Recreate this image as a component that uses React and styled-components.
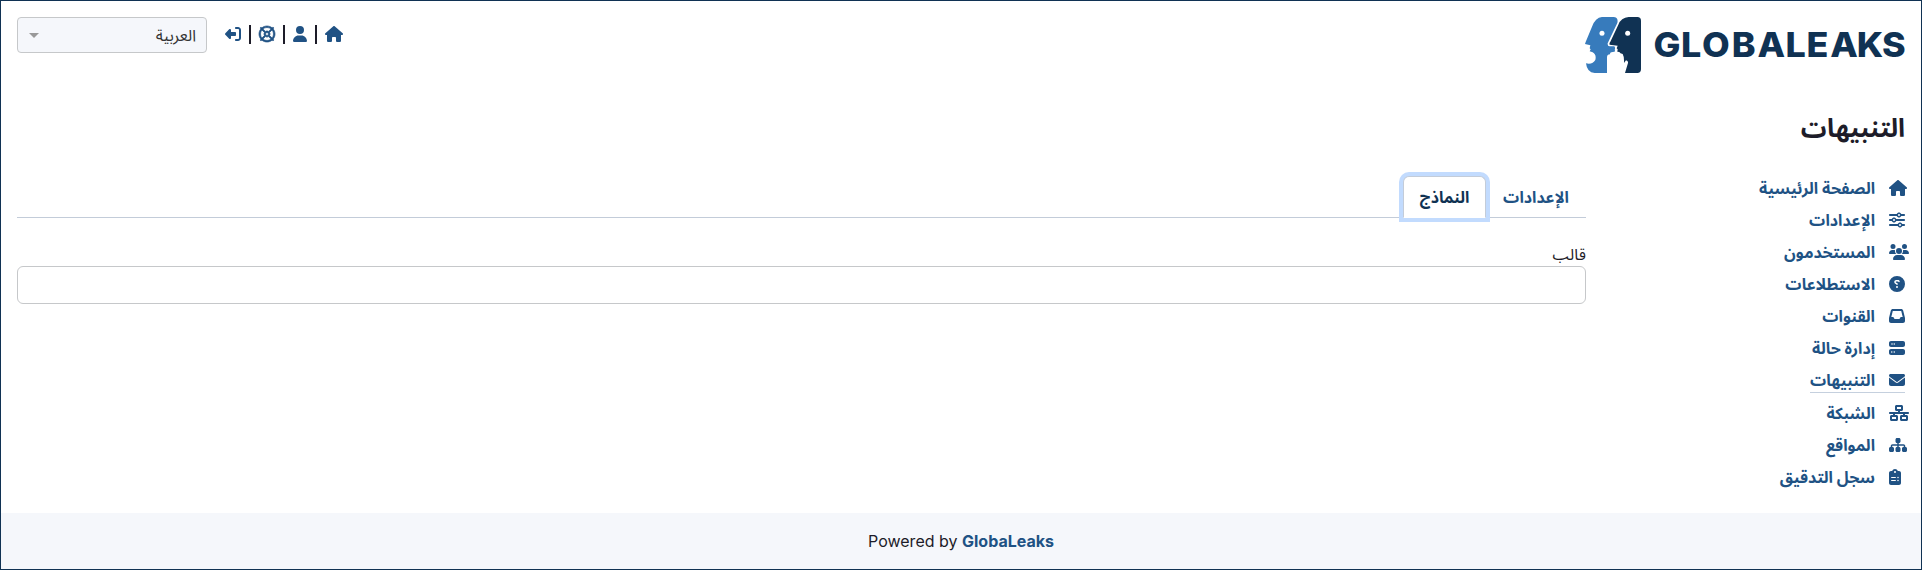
import React from "react";
import styled, { createGlobalStyle, css } from "styled-components";
import {
  FaHouse, FaUser, FaRegLifeRing, FaRightFromBracket, FaSliders, FaUsers, FaCircleQuestion,
  FaInbox, FaServer, FaEnvelope, FaNetworkWired, FaSitemap, FaClipboardList,
} from "react-icons/fa6";

const navy = "#103253";
const link = "#205284";
const ink = "#1d1c29";

const GlobalStyle = createGlobalStyle`
  * { box-sizing: border-box; }
  body {
    margin: 0;
    color: ${ink};
    background: #fff;
    font: 16px/24px Inter, "Noto Sans Arabic", "Noto Sans", "DejaVu Sans", sans-serif;
  }
`;

const Page = styled.div`
  display: flex;
  flex-direction: column;
  height: 570px;
  border: 1px solid ${navy};
  overflow: hidden;
`;

const Header = styled.header`
  display: flex;
  justify-content: space-between;
  align-items: flex-start;
  height: 95px;
  padding: 16px 16px 0;
`;

const Logo = styled.svg`
  display: block;
  width: 322px;
  height: 58px;
`;

const Wordmark = styled.text`
  font: 800 34.5px Inter, sans-serif;
  fill: ${navy};
  direction: ltr;
`;

const Tools = styled.div`
  display: flex;
  align-items: flex-start;
  gap: 18px;
`;

const ToolLinks = styled.div`
  display: flex;
  align-items: center;
  gap: 8px;
  height: 34px;
  color: ${link};
`;

const Divider = styled.span`
  width: 2px;
  height: 19px;
  background: ${ink};
`;

const Icon = styled.span`
  display: flex;
  flex: none;
  width: ${(p) => p.$box || p.$glyph}px;
  direction: ltr;
  svg {
    flex: none;
    width: ${(p) => p.$glyph}px;
    height: 16px;
    transform: scaleX(-1);
    overflow: visible;
    ${(p) => p.$heavy && css`stroke-width: 22px;`}
  }
`;

const LanguageSelect = styled.div`
  display: flex;
  align-items: center;
  justify-content: space-between;
  width: 190px;
  height: 36px;
  padding: 0 10px 0 11px;
  border: 1px solid #c6c8ca;
  border-radius: 4px;
  background: #f5f7fb;
  color: #333;
`;

const Caret = styled.span`
  border: 5px solid transparent;
  border-top-color: #999;
  border-bottom: 0;
`;

const Title = styled.h1`
  height: 67px;
  margin: 0;
  padding: 13px 16px 0;
  font-size: 25.6px;
  font-weight: 700;
  line-height: 38px;
`;

const Body = styled.div`
  display: flex;
  flex: 1;
  padding: 0 16px;
`;

const Sidebar = styled.nav`
  display: flex;
  flex-direction: column;
  align-items: flex-start;
  width: 319px;
  padding-top: 9px;
`;

const NavLink = styled.a`
  display: flex;
  align-items: center;
  gap: 14px;
  height: ${(p) => (p.$active ? 25 : 24)}px;
  margin: 4px 0;
  border-bottom: ${(p) => (p.$active ? "1px solid #c5d0de" : "0")};
  color: ${link};
  font-weight: 700;
`;

const Main = styled.main`
  flex: 1;
  padding-top: 12px;
`;

const Tabs = styled.div`
  display: flex;
  height: 43px;
  border-bottom: 1px solid #c3ccd9;
`;

const Tab = styled.a`
  display: flex;
  align-items: center;
  justify-content: center;
  width: ${(p) => (p.$active ? 83 : 100)}px;
  height: 42px;
  margin-top: 1px;
  color: ${(p) => (p.$active ? navy : link)};
  font-weight: 700;
  ${(p) => p.$active && css`
    border: 1px solid #c3ccd9;
    border-bottom-color: #fff;
    border-radius: 6px 6px 0 0;
    background: #fff;
    box-shadow: 0 0 0 4px #c2dbfe;
  `}
`;

const Field = styled.label`
  display: block;
  margin-top: 24px;
`;

const Input = styled.input`
  display: block;
  width: 100%;
  height: 38px;
  border: 1px solid #c6c8ca;
  border-radius: 6px;
  background: #fff;
`;

const Footer = styled.footer`
  height: 56px;
  padding-top: 16px;
  background: #f5f7fb;
  text-align: center;
  direction: ltr;
`;

const FooterLink = styled.a`
  color: ${link};
  font-weight: 700;
`;

const NAV = [
  ["الصفحة الرئيسية", FaHouse, 18],
  ["الإعدادات", FaSliders, 16],
  ["المستخدمون", FaUsers, 20],
  ["الاستطلاعات", FaCircleQuestion, 16],
  ["القنوات", FaInbox, 16],
  ["إدارة حالة", FaServer, 16],
  ["التنبيهات", FaEnvelope, 16, true],
  ["الشبكة", FaNetworkWired, 20],
  ["المواقع", FaSitemap, 18],
  ["سجل التدقيق", FaClipboardList, 12],
];

const TOOLS = [[FaHouse, 18], [FaUser, 14], [FaRegLifeRing, 16, true], [FaRightFromBracket, 16]];

function GlobaLeaksLogo() {
  return (
    <Logo viewBox="0 0 322 58">
      <g transform="translate(1 -3) scale(.33333)">
        <path fill="#377bbc" d="M54 9H88Q104 10 100 27L71 88Q70 96 77 97L91 97Q95 102 92 108Q96 114 86 114Q78 114 78 121Q69 121 69 130V177H32Q9 176 6 148Q26 152 34 138Q38 122 26 115L17 112L20 106L17 103L19 94L3 90L5 84L24 38Q34 11 54 9Z" />
        <path fill={navy} d="M134 9H160Q171 9 171 20V166Q171 177 160 177H123L132 147Q133 140 126 139L120 147Q121 128 116 120Q108 119 106 114L100 113L101 106L98 103L101 95L77 92Q75 88 79 83L103 32Q111 11 134 9Z" />
        <circle cx="54" cy="58" r="7.5" fill="#fff" />
        <circle cx="131" cy="58" r="7.5" fill="#fff" />
      </g>
      <g transform="scale(1.04 1)">
        <Wordmark x="67.7 94.2 114.4 143 167.8 194.8 214.8 237.7 263.2 287.4" y="40">GLOBALEAKS</Wordmark>
      </g>
    </Logo>
  );
}

export default function App() {
  return (
    <Page dir="rtl">
      <GlobalStyle />
      <Header>
        <GlobaLeaksLogo />
        <Tools>
          <ToolLinks>
            {TOOLS.map(([Glyph, width, heavy], i) => (
              <React.Fragment key={i}>
                {i > 0 && <Divider />}
                <Icon $glyph={width} $heavy={heavy}><Glyph /></Icon>
              </React.Fragment>
            ))}
          </ToolLinks>
          <LanguageSelect><span>العربية</span><Caret /></LanguageSelect>
        </Tools>
      </Header>
      <Title>التنبيهات</Title>
      <Body>
        <Sidebar>
          {NAV.map(([label, Glyph, width, active]) => (
            <NavLink key={label} $active={active}>
              <Icon $box={16} $glyph={width}><Glyph /></Icon>
              <span>{label}</span>
            </NavLink>
          ))}
        </Sidebar>
        <Main>
          <Tabs>
            <Tab>الإعدادات</Tab>
            <Tab $active>النماذج</Tab>
          </Tabs>
          <Field>قالب<Input /></Field>
        </Main>
      </Body>
      <Footer>Powered by <FooterLink>GlobaLeaks</FooterLink></Footer>
    </Page>
  );
}
